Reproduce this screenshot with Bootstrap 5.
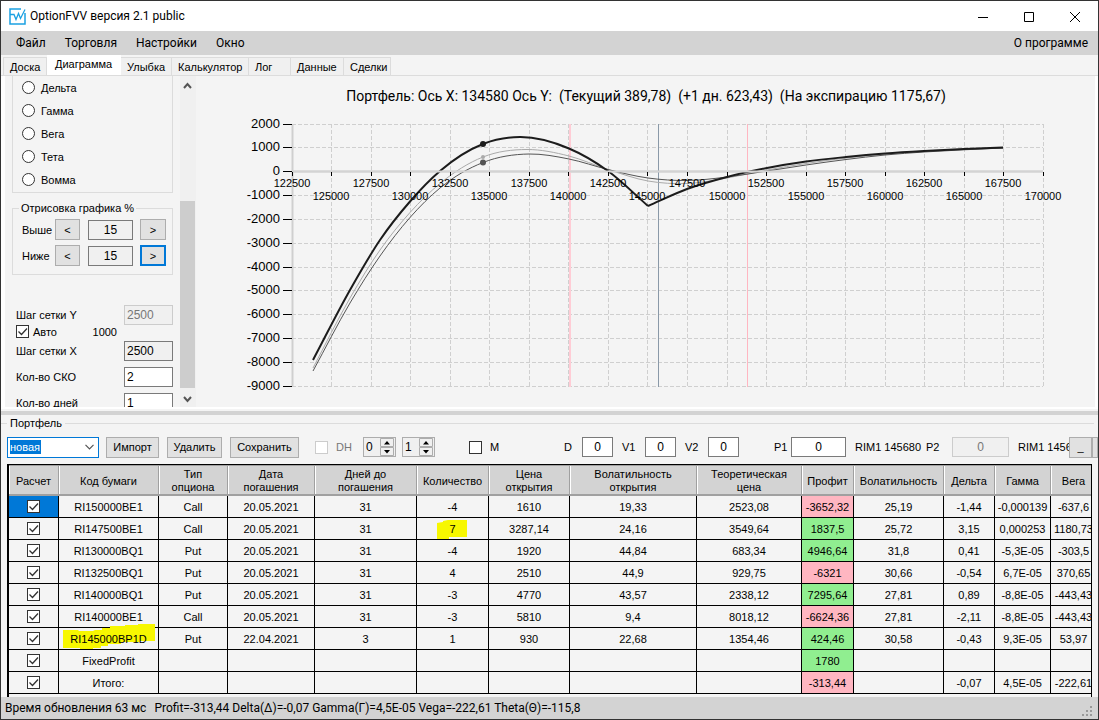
<!DOCTYPE html>
<html lang="ru">
<head>
<meta charset="utf-8">
<meta name="viewport" content="width=device-width, initial-scale=1">
<title>OptionFVV версия 2.1 public</title>
<link rel="stylesheet" href="https://cdn.jsdelivr.net/npm/bootstrap@5.3.0/dist/css/bootstrap.min.css">
<style>
:root{--bar:#d3d3d3;--face:#f4f4f4;--line:#dcdcdc;--blue:#0078d7}
body{font:11px/16px "Liberation Sans",Arial,sans-serif;color:#000;background:var(--face);border:1px solid #333}
.ui-font{font-family:Roboto,"Noto Sans",sans-serif;font-size:12px}
.titlebar{height:30px;background:#fff}
.titlebar button{width:46px;height:30px;border:0;background:none;padding:0}
.menubar{height:24px;background:var(--bar);padding:0 10px 0 15px;gap:19px}
.menubar a,.menubar a:hover{color:#000;text-decoration:none}
.tabstrip{height:21px;border-bottom:1px solid var(--line);padding-left:2px}
.tabstrip button{height:18px;border:1px solid var(--line);border-width:1px 1px 0 0;background:#f0f0f0;padding:0 0 0 6px;text-align:left;color:#000}
.tabstrip button.first{border-left-width:1px}
.tabstrip button.current{height:20px;background:#fff;padding-left:8px;padding-bottom:3px;border-color:#fff}
.t1{width:44px}.t2{width:74px}.t3{width:51px}.t4{width:77px}.t5{width:42px}.t6{width:53px}.t7{width:47px}
.workspace{border-left:4px solid #fff;border-right:3px solid #fff;border-bottom:2px solid #fff;flex:1 1 0;min-height:0}
.side{width:175px;padding-left:7px}
.groupbox{border:1px solid var(--line);width:161px;position:relative}
.groupbox.greeks{border-top:0;height:117px;padding-left:9px}
.greeks label{height:23px;gap:6px}
.greeks input{appearance:none;width:13px;height:13px;margin:0;border:1px solid #333;border-radius:50%;background:#fff}
.groupbox.scale{margin-top:15px;height:67px;padding:10px 0 0 9px}
.groupbox .caption{position:absolute;top:-9px;left:6px;padding:0 2px;background:var(--face);white-space:nowrap}
.scale-row{display:grid;grid-template-columns:33px 33px 52px 26px;align-items:center;height:21px;margin-bottom:5px}
.push{background:#e1e1e1;border:1px solid #adadad;height:21px;padding:0;color:#000;text-align:center}
.push.focused{border:2px solid var(--blue)}
.box{border:1px solid #7a7a7a;background:#fff;height:20px;padding:0 2px;color:#000;border-radius:0;line-height:16px;font-size:12px}
.box.off{background:#f0f0f0}
.box:disabled{border-color:#ccc;color:#777;background:#f0f0f0}
.w-45{width:45px}.w-31{width:31px}.w-55{width:55px}.w-57{width:57px}.w-49{width:49px}
.params{margin-top:30px;padding-left:4px;width:161px}
.param{height:20px;margin-bottom:6px}
.param.tight{margin-bottom:0}
.auto{height:13px;margin-bottom:3px}
.tick{appearance:none;width:13px;height:13px;margin:0;border:1px solid #333;background:#fff;flex:none}
.tick:checked{background:#fff url("data:image/svg+xml,%3Csvg xmlns='http://www.w3.org/2000/svg' viewBox='0 0 11 11'%3E%3Cpath d='M1.5 5.5l3 3 5.5-6' fill='none' stroke='%23333' stroke-width='1.3'/%3E%3C/svg%3E") center/11px no-repeat}
.tick:disabled{border-color:#ccc}
.vscroll{width:16px;background:#f0f0f0}
.vscroll .thumb{background:#cdcdcd;margin-top:108px;height:187px;width:15px}
.chart{min-width:0}
.chart svg{font-family:"Liberation Sans",Arial,sans-serif}
.chart .heading{font-family:Roboto,sans-serif}
.splitter{height:4px;background:var(--bar);margin-top:2px}
.legend-row{height:16px;gap:3px;padding:0 4px 0 0}
.legend-row::before{content:"";width:6px;border-top:1px solid var(--line)}
.legend-row::after{content:"";flex:1;border-top:1px solid var(--line)}
.tools{display:grid;grid-template-columns:99px 61px 63px 85px 48px 39px 67px 95px 18px 40px 23px 40px 23px 66px 17px 64px 71px 26px 66px 51px 23px minmax(0,1fr);align-items:center;padding:5px 0 6px 6px;height:33px;overflow:hidden;white-space:nowrap}
.combo{appearance:none;width:92px;height:21px;border:1px solid var(--blue);border-radius:0;padding:0 2px;color:#fff;line-height:18px;background:url("data:image/svg+xml,%3Csvg xmlns='http://www.w3.org/2000/svg' viewBox='0 0 9 6'%3E%3Cpath d='M.5.8l4 4 4-4' fill='none' stroke='%23555' stroke-width='1.2'/%3E%3C/svg%3E") right 4px center/9px 6px no-repeat,linear-gradient(var(--blue),var(--blue)) 2px 2px/31px 14px no-repeat,#fff}
.combo option{color:#000}
.spin{width:33px;height:20px;border:1px solid #adadad;background:#f0f0f0}
.spin input{width:16px;border:0;background:none;padding:0 0 0 2px;font-size:12px;appearance:textfield}
.spin svg{width:14px;height:18px}
.muted-text{color:#777}
.grid-wrap{margin:0 6px;border:solid #000;border-width:1px 1px 0 2px;overflow:hidden;padding-bottom:3px}
.positions{table-layout:fixed;width:1088px;border-collapse:separate;border-spacing:0;text-align:center}
.positions th{height:31px;background:var(--bar);font-weight:400;line-height:13px;padding:2px 0 0;border-bottom:2px solid #a0a0a0;border-top:1px solid #a0a0a0;border-right:1px solid #a0a0a0;box-shadow:inset 1px 0 #fff}
.positions td{height:22px;padding:0;line-height:16px;border-right:1px solid #000;border-bottom:1px solid #000;white-space:nowrap;position:relative}
.positions td .tick{display:block;margin:auto}
.positions .up{background:#90ee90}.positions .down{background:#ffb6c1}
.positions .picked{background:var(--blue)}
.marker{position:absolute;z-index:0}
.marker + span{position:relative;z-index:1}
.m-code{left:4px;top:-4px;width:93px;height:25px}
.m-qty{left:20px;top:2px;width:31px;height:19px}
.statusbar{height:22px;background:var(--bar);padding:0 4px}
</style>
</head>
<body class="vh-100 d-flex flex-column overflow-hidden">
<header class="titlebar ui-font d-flex align-items-center flex-shrink-0">
  <svg class="ms-2" width="17" height="17" viewBox="0 0 17 17" fill="none" stroke="#1ba1e2"><path d="M12 1H1v15h15V5" stroke-width="1.5"/><path d="M1 6.5h4l2 5 2.5-6 2 5L16 1.5" stroke-width="1.3"/></svg>
  <span class="ms-1">OptionFVV версия 2.1 public</span>
  <div class="ms-auto d-flex">
    <button type="button" aria-label="Свернуть"><svg width="10" height="10" stroke="#000"><path d="M0 5.5h10"/></svg></button>
    <button type="button" aria-label="Развернуть"><svg width="10" height="10" fill="none" stroke="#000"><path d="M.5.5h9v9h-9z"/></svg></button>
    <button type="button" aria-label="Закрыть"><svg width="10" height="10" stroke="#000"><path d="M0 0l10 10M10 0L0 10"/></svg></button>
  </div>
</header>
<nav class="menubar ui-font d-flex align-items-center flex-shrink-0">
  <a href="#">Файл</a><a href="#">Торговля</a><a href="#">Настройки</a><a href="#">Окно</a>
  <a href="#" class="ms-auto">О программе</a>
</nav>
<div class="tabstrip d-flex align-items-end flex-shrink-0" role="tablist">
  <button type="button" role="tab" class="first t1">Доска</button><button type="button" role="tab" class="current t2" aria-selected="true">Диаграмма</button><button type="button" role="tab" class="t3">Улыбка</button><button type="button" role="tab" class="t4">Калькулятор</button><button type="button" role="tab" class="t5">Лог</button><button type="button" role="tab" class="t6">Данные</button><button type="button" role="tab" class="t7">Сделки</button>
</div>
<main class="workspace d-flex overflow-hidden">
  <aside class="side flex-shrink-0 overflow-hidden">
    <div class="groupbox greeks">
      <label class="d-flex align-items-center"><input type="radio" name="greek">Дельта</label>
      <label class="d-flex align-items-center"><input type="radio" name="greek">Гамма</label>
      <label class="d-flex align-items-center"><input type="radio" name="greek">Вега</label>
      <label class="d-flex align-items-center"><input type="radio" name="greek">Тета</label>
      <label class="d-flex align-items-center"><input type="radio" name="greek">Вомма</label>
    </div>
    <div class="groupbox scale">
      <span class="caption">Отрисовка графика %</span>
      <div class="scale-row"><label for="above">Выше</label><button type="button" class="push me-2">&lt;</button><input id="above" class="box off w-45 text-center" value="15"><button type="button" class="push">&gt;</button></div>
      <div class="scale-row"><label for="below">Ниже</label><button type="button" class="push me-2">&lt;</button><input id="below" class="box off w-45 text-center" value="15"><button type="button" class="push focused">&gt;</button></div>
    </div>
    <div class="params">
      <div class="param tight d-flex align-items-center justify-content-between"><label for="stepY">Шаг сетки Y</label><input id="stepY" class="box w-49" value="2500" disabled></div>
      <div class="auto d-flex align-items-center"><input id="auto" type="checkbox" class="tick me-1" checked><label for="auto">Авто</label><span class="ms-auto me-5 pe-2">1000</span></div>
      <div class="param d-flex align-items-center justify-content-between"><label for="stepX">Шаг сетки X</label><input id="stepX" class="box off w-49" value="2500"></div>
      <div class="param d-flex align-items-center justify-content-between"><label for="sko">Кол-во СКО</label><input id="sko" class="box w-49" value="2"></div>
      <div class="param d-flex align-items-center justify-content-between"><label for="days">Кол-во дней</label><input id="days" class="box w-49" value="1"></div>
    </div>
  </aside>
  <div class="vscroll flex-shrink-0 d-flex flex-column align-items-start">
    <svg width="15" height="17" fill="none" stroke="#555" stroke-width="2"><path d="M4 12l3.500-4 3.500 4"/></svg>
    <div class="thumb"></div>
    <svg width="15" height="17" fill="none" stroke="#555" stroke-width="2"><path d="M4 9l3.500 4 3.500-4"/></svg>
  </div>
  <div class="chart flex-grow-1">
    <svg id="chart" class="w-100 h-100 d-block" viewBox="196 76 899 331"></svg>
  </div>
</main>
<div class="splitter flex-shrink-0"></div>
<section class="flex-shrink-0">
  <div class="legend-row d-flex align-items-center">Портфель</div>
  <div class="tools">
    <select class="combo" aria-label="Портфель"><option>новая</option></select>
    <button type="button" class="push me-2">Импорт</button>
    <button type="button" class="push me-2">Удалить</button>
    <button type="button" class="push me-3">Сохранить</button>
    <label class="d-flex align-items-center muted-text"><input type="checkbox" class="tick me-2" disabled>DH</label>
    <div class="spin d-flex"><input value="0" aria-label="DH от"><svg viewBox="0 0 14 18"><path d="M.5.5h13v8H.5zM.5 9.500h13v8H.5z" fill="#f0f0f0" stroke="#adadad"/><path d="M4 6.500h6L7 3zM4 12h6l-3 3.500z"/></svg></div>
    <div class="spin d-flex"><input value="1" aria-label="DH шаг"><svg viewBox="0 0 14 18"><path d="M.5.5h13v8H.5zM.5 9.500h13v8H.5z" fill="#f0f0f0" stroke="#adadad"/><path d="M4 6.500h6L7 3zM4 12h6l-3 3.500z"/></svg></div>
    <label class="d-flex align-items-center"><input type="checkbox" class="tick me-2">M</label>
    <label for="d">D</label><input id="d" class="box w-31 text-center" value="0">
    <label for="v1">V1</label><input id="v1" class="box w-31 text-center" value="0">
    <label for="v2">V2</label><input id="v2" class="box w-31 text-center" value="0">
    <label for="p1">P1</label><input id="p1" class="box w-55 text-center" value="0">
    <span>RIM1 145680</span>
    <label for="p2">P2</label><input id="p2" class="box w-57 text-center" value="0" disabled>
    <span class="overflow-hidden">RIM1 145680</span>
    <button type="button" class="push">_</button><button type="button" class="push" aria-label="Ещё"></button>
  </div>
  <div class="grid-wrap">
    <table class="positions">
      <colgroup id="cols"></colgroup>
      <thead><tr><th>Расчет</th><th>Код бумаги</th><th>Тип<br>опциона</th><th>Дата<br>погашения</th><th>Дней до<br>погашения</th><th>Количество</th><th>Цена<br>открытия</th><th>Волатильность<br>открытия</th><th>Теоретическая<br>цена</th><th>Профит</th><th>Волатильность</th><th>Дельта</th><th>Гамма</th><th>Вега</th></tr></thead>
      <tbody id="rows"></tbody>
    </table>
  </div>
</section>
<footer class="statusbar ui-font flex-shrink-0 d-flex align-items-center">
  <span>Время обновления 63 мс</span><span class="ms-2">Profit=-313,44 Delta(Δ)=-0,07 Gamma(Г)=4,5E-05 Vega=-222,61 Theta(Θ)=-115,8</span>
  <svg class="ms-auto align-self-end" width="12" height="14" fill="#999"><path d="M8 1h2v2H8zM8 5h2v2H8zM8 9h2v2H8zM4 5h2v2H4zM4 9h2v2H4zM0 9h2v2H0z"/></svg>
</footer>
<script src="https://cdn.jsdelivr.net/npm/bootstrap@5.3.0/dist/js/bootstrap.bundle.min.js"></script>
<script>
// Positions table
const widths = [50,100,69,87,102,72,81,127,105,52,90,51,56,46];
document.getElementById('cols').innerHTML = widths.map(w => `<col style="width:${w}px">`).join('');
const data = [
 'RI150000BE1|Call|20.05.2021|31|-4|1610|19,33|2523,08|-3652,32|25,19|-1,44|-0,000139|-637,6',
 'RI147500BE1|Call|20.05.2021|31|7|3287,14|24,16|3549,64|1837,5|25,72|3,15|0,000253|1180,73',
 'RI130000BQ1|Put|20.05.2021|31|-4|1920|44,84|683,34|4946,64|31,8|0,41|-5,3E-05|-303,5',
 'RI132500BQ1|Put|20.05.2021|31|4|2510|44,9|929,75|-6321|30,66|-0,54|6,7E-05|370,65',
 'RI140000BQ1|Put|20.05.2021|31|-3|4770|43,57|2338,12|7295,64|27,81|0,89|-8,8E-05|-443,43',
 'RI140000BE1|Call|20.05.2021|31|-3|5810|9,4|8018,12|-6624,36|27,81|-2,11|-8,8E-05|-443,43',
 'RI145000BP1D|Put|22.04.2021|3|1|930|22,68|1354,46|424,46|30,58|-0,43|9,3E-05|53,97',
 'FixedProfit||||||||1780||||',
 'Итого:||||||||-313,44||-0,07|4,5E-05|-222,61'];
const markers = {
 '6,0': '<svg class="marker m-code" viewBox="0 0 93 25"><path fill="#f7f700" d="M0 6h15l1 1h14l2-1h7V4h8V2h15V1h13V0h17v17H77v1H58v2H45v2H38v2H30v1H17v-1H0z"/></svg>',
 '1,4': '<svg class="marker m-qty" viewBox="0 0 31 19"><path fill="#f7f700" d="M0 3l6-1V1l5-1h19v17H12v2H0z"/></svg>'};
document.getElementById('rows').innerHTML = data.map((line, r) =>
 `<tr><td class="${r ? '' : 'picked'}"><input type="checkbox" class="tick" checked aria-label="Расчет"></td>` +
 line.split('|').map((v, c) => `<td class="${c === 8 ? (v[0] === '-' ? 'down' : 'up') : ''}">${markers[r + ',' + c] || ''}<span>${v}</span></td>`).join('') + '</tr>').join('');

// Payoff chart
const gx = [...Array(20).keys()].map(i => Math.floor(292 + i * 39.55) + .5);
const gy = [...Array(12).keys()].map(i => Math.floor(124 + i * 23.85) + .5);
// Cubic Hermite through the points, slopes weighted by the distance between them
const slope = (p, i) => {
  const s = k => (p[k + 1][1] - p[k][1]) / (p[k + 1][0] - p[k][0]);
  if (i === 0) return s(0);
  if (i === p.length - 1) return s(i - 1);
  const a = p[i][0] - p[i - 1][0], b = p[i + 1][0] - p[i][0];
  return (s(i - 1) * b + s(i) * a) / (a + b);
};
const smooth = p => p.slice(1).reduce((d, b, i) => {
  const a = p[i], h = (b[0] - a[0]) / 3;
  return d + `C${a[0] + h} ${a[1] + h * slope(p, i)} ${b[0] - h} ${b[1] - h * slope(p, i + 1)} ${b[0]} ${b[1]}`;
}, 'M' + p[0]);
const curve = (p, color, w) => `<path d="${smooth(p)}" fill="none" stroke="${color}" stroke-width="${w}"/>`;
const vline = (x, color, w) => `<path d="M${x} 124V387" stroke="${color}" stroke-width="${w}"/>`;
const expLeft = [[313,360],[350,290],[380,240],[410,201.5],[440,171],[483,144],[520,137],[569,148.5],[608,171],[648,206]];
const expRight = [[648,206],[687,189],[727,177],[767,168],[806,161.5],[846,157],[885,153.5],[924,151],[964,149],[1003,147.5]];
const now = [[313,371],[350,303],[380,256],[410,217.5],[440,188],[483,162.5],[529,154],[569,159],[608,169.5],[648,178],[687,180.5],[727,177],[767,171],[806,165],[846,159.5],[885,155],[924,152],[1003,148]];
const next = [[313,368],[350,298],[380,250],[410,212.5],[440,183.5],[483,157],[527,149.5],[569,156],[608,169.5],[648,181],[687,183.5],[727,178],[767,170],[806,163.5],[846,158],[885,154],[924,151],[1003,148]];
document.getElementById('chart').innerHTML =
 `<text class="heading" x="646" y="101" font-size="14" text-anchor="middle" xml:space="preserve">Портфель: Ось X: 134580 Ось Y:  (Текущий 389,78)  (+1 дн. 623,43)  (На экспирацию 1175,67)</text>
 <g stroke="#cfcfcf" stroke-dasharray="4 2">${gx.map(x => `<path d="M${x} 124V387"/>`).join('')}${gy.map(y => `<path d="M292 ${y}H1043"/>`).join('')}</g>
 <path d="M292.500 124V387M292 171.500H1043" stroke="#cfcfcf" stroke-width="2"/>
 ${vline(570, '#ffccd5', 2)}${vline(658.5, '#8a99a8', 1)}${vline(747.5, '#ffb6c1', 1)}
 ${curve(next, '#aaa', 1)}${curve(now, '#555', 1)}${curve(expLeft, '#1c1c1c', 2)}${curve(expRight, '#1c1c1c', 2)}
 <path d="M292 171.500H1043" stroke="#d3d3d3" stroke-width="2"/>
 <circle cx="483" cy="144" r="3" fill="#1c1c1c"/><circle cx="483" cy="157" r="2" fill="#aaa"/><circle cx="483" cy="162.500" r="3" fill="#555"/>
 <g stroke="#000">${gy.map(y => `<path d="M283 ${y}h9"/>`).join('')}${gx.map(x => `<path d="M${x} 172v4"/>`).join('')}</g>
 <g font-size="13" text-anchor="end">${gy.map((y, i) => `<text x="280" y="${y + 3.5}">${2000 - i * 1000}</text>`).join('')}</g>
 <g font-size="11" text-anchor="middle">${gx.map((x, i) => `<text x="${x - .5}" y="${i % 2 ? 200 : 187}">${122500 + i * 2500}</text>`).join('')}</g>`;
</script>
</body>
</html>
